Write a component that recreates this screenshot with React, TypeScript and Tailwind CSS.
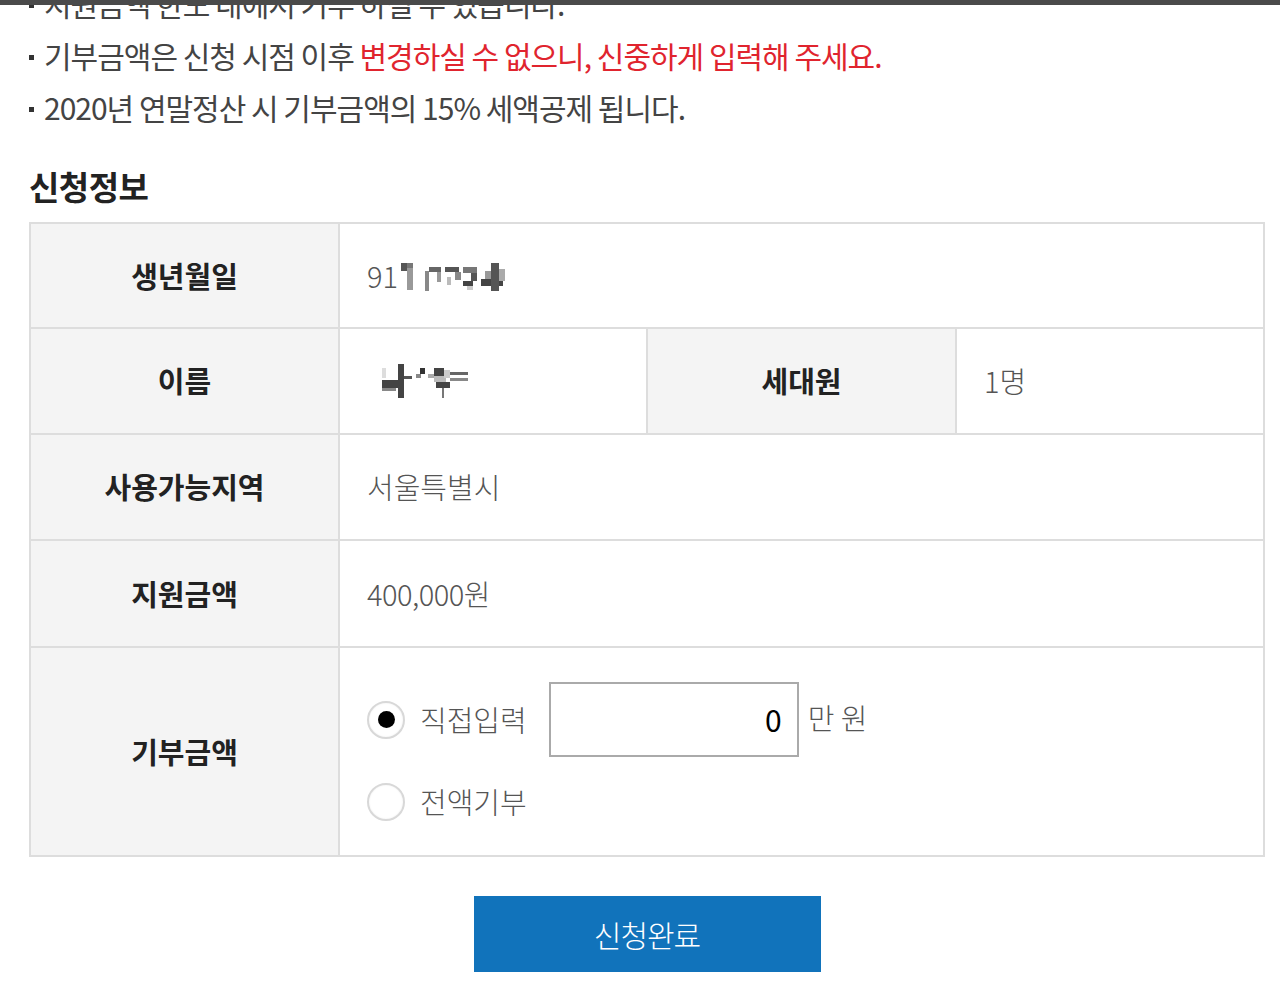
import React from "react";

const font = { fontFamily: '"Noto Sans CJK KR", "Noto Sans", sans-serif' };

function Mosaic({ w, h, cells }: { w: number; h: number; cells: [number, number, number, number, string][] }) {
  return (
    <svg width={w} height={h} viewBox={`0 0 ${w} ${h}`} className="block">
      {cells.map(([x, y, cw, ch, c], i) => (
        <rect key={i} x={x} y={y} width={cw} height={ch} fill={c} />
      ))}
    </svg>
  );
}

function Bullet({ children }: { children: React.ReactNode }) {
  return (
    <div className="flex items-center h-[52px]">
      <span className="w-[5px] h-[5px] bg-[#333] mr-[10px] mt-[4px] shrink-0" />
      <span className="whitespace-nowrap">{children}</span>
    </div>
  );
}

function Radio({ checked }: { checked?: boolean }) {
  return (
    <span className="w-[38px] h-[38px] rounded-full border-2 border-[#d8d8d8] bg-white flex items-center justify-center shadow-[inset_0_0_2px_rgba(0,0,0,0.08)]">
      {checked && <span className="w-[17px] h-[17px] rounded-full bg-black" />}
    </span>
  );
}

export default function App() {
  return (
    <div className="relative w-[1280px] h-[994px] bg-white overflow-hidden" style={font}>
      <div className="absolute top-0 left-0 right-0 h-[5px] bg-[#4a4a4a] z-10" />
      <div className="px-[29px]">
        <div className="mt-[-23px] text-[30px] text-[#444] tracking-[-1px] leading-[52px]">
          <Bullet>지원금액 한도 내에서 기부 하실 수 있습니다.</Bullet>
          <Bullet>
            기부금액은 신청 시점 이후 <span className="text-[#e0242e]">변경하실 수 없으니, 신중하게 입력해 주세요.</span>
          </Bullet>
          <Bullet>2020년 연말정산 시 기부금액의 15% 세액공제 됩니다.</Bullet>
        </div>

        <h2 className="mt-[33px] text-[33px] font-bold text-[#222] tracking-[-0.5px] leading-[40px]">신청정보</h2>

        <div className="mt-[16px] w-[1236px] grid grid-cols-[307px_306px_307px_306px] gap-[2px] bg-[#dddddd] border-2 border-[#dddddd] text-[29px]">
          {/* row 1 */}
          <div className="h-[103px] bg-[#f4f4f4] flex items-center justify-center font-bold text-[#222]">생년월일</div>
          <div className="col-span-3 bg-white flex items-center pl-[27px] text-[#555] font-light">
            <span>91</span>
            <span className="ml-[3px] mt-[2px]">
              <Mosaic
                w={106}
                h={28}
                cells={[
                  [0, 0, 6, 8, "#555"], [6, 0, 6, 5, "#777"], [6, 5, 6, 22, "#999"],
                  [24, 8, 4, 20, "#888"], [28, 4, 12, 5, "#666"], [36, 9, 4, 10, "#999"],
                  [44, 4, 14, 5, "#555"], [54, 9, 6, 8, "#888"], [46, 14, 4, 8, "#bbb"],
                  [62, 4, 14, 6, "#777"], [70, 10, 6, 8, "#555"], [62, 18, 10, 5, "#444"],
                  [66, 23, 6, 4, "#ccc"], [80, 16, 22, 7, "#444"], [90, 0, 8, 28, "#555"],
                  [84, 8, 6, 8, "#999"], [98, 6, 6, 12, "#aaa"]
                ]}
              />
            </span>
          </div>

          {/* row 2 */}
          <div className="h-[104px] bg-[#f4f4f4] flex items-center justify-center font-bold text-[#222]">이름</div>
          <div className="bg-white flex items-center pl-[42px]">
            <Mosaic
              w={90}
              h={34}
              cells={[
                [0, 4, 4, 10, "#ddd"], [0, 16, 16, 8, "#444"], [0, 24, 14, 3, "#888"],
                [16, 0, 6, 34, "#444"], [22, 12, 8, 3, "#555"], [38, 4, 5, 6, "#333"],
                [34, 10, 5, 4, "#888"], [46, 10, 6, 4, "#aaa"], [52, 4, 10, 8, "#444"],
                [52, 12, 12, 6, "#bbb"], [62, 6, 6, 8, "#ccc"], [54, 18, 14, 6, "#444"],
                [68, 8, 18, 3, "#666"], [68, 14, 18, 3, "#888"], [60, 24, 2, 10, "#777"]
              ]}
            />
          </div>
          <div className="bg-[#f4f4f4] flex items-center justify-center font-bold text-[#222]">세대원</div>
          <div className="bg-white flex items-center pl-[27px] text-[#555] font-light">1명</div>

          {/* row 3 */}
          <div className="h-[104px] bg-[#f4f4f4] flex items-center justify-center font-bold text-[#222]">사용가능지역</div>
          <div className="col-span-3 bg-white flex items-center pl-[27px] text-[#555] font-light">서울특별시</div>

          {/* row 4 */}
          <div className="h-[105px] bg-[#f4f4f4] flex items-center justify-center font-bold text-[#222]">지원금액</div>
          <div className="col-span-3 bg-white flex items-center pl-[27px] text-[#555] font-light tracking-[-0.5px]">400,000원</div>

          {/* row 5 */}
          <div className="h-[207px] bg-[#f4f4f4] flex items-center justify-center font-bold text-[#222]">기부금액</div>
          <div className="col-span-3 bg-white pl-[27px] pt-[34px] text-[#555] font-light">
            <div className="flex items-center h-[75px]">
              <Radio checked />
              <span className="ml-[15px]">직접입력</span>
              <div className="ml-[22px] w-[250px] h-[75px] border-2 border-[#aaaaaa] flex items-center justify-end pr-[15px] text-[30px] text-black font-normal">
                0
              </div>
              <span className="ml-[9px] self-start mt-[14px]">만 원</span>
            </div>
            <div className="flex items-center h-[40px] mt-[25px]">
              <Radio />
              <span className="ml-[15px]">전액기부</span>
            </div>
          </div>
        </div>

        <div className="w-[1236px] flex justify-center mt-[39px]">
          <button className="w-[347px] h-[76px] bg-[#1173bb] text-white text-[30px] tracking-[-1px] font-light">신청완료</button>
        </div>
      </div>
    </div>
  );
}
